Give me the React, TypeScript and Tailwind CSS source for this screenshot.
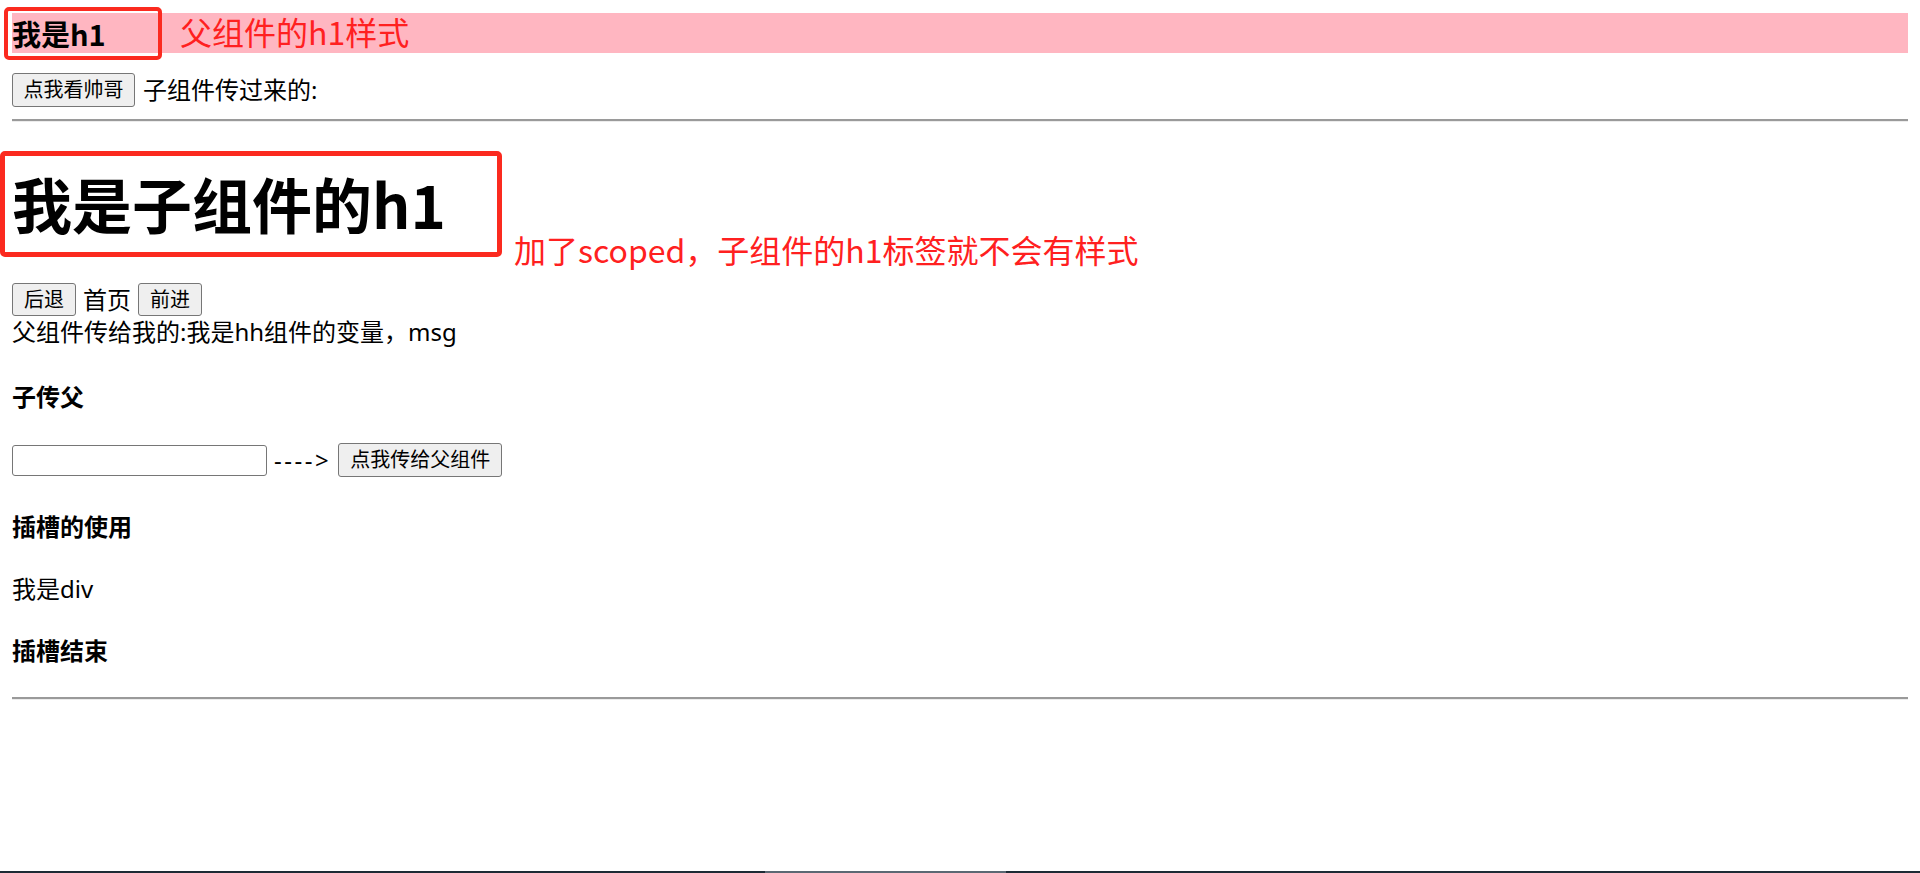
import React from "react";

const btn =
  "h-[33px] px-[9px] text-[20px] leading-none bg-[#efefef] border border-[#767676] rounded-[3px] text-black flex items-center justify-center";

export default function App() {
  return (
    <div className="min-h-[873px] flex flex-col bg-white text-black font-['Noto_Sans','Noto_Sans_CJK_SC',sans-serif]">
      <div className="relative px-[12px]">
        {/* parent h1 */}
        <div className="relative mt-[13px] h-[40px] bg-[#ffb6c1] flex items-center">
          <h1 className="text-[29px] font-bold leading-[40px] font-['Noto_Sans_CJK_SC',sans-serif]">我是h1</h1>
          <span className="absolute left-[168px] top-[-2px] text-[32px] leading-[40px] text-[#ff2020] font-['Noto_Sans_CJK_SC',sans-serif]">
            父组件的h1样式
          </span>
        </div>
        <div className="absolute left-[4px] top-[7px] w-[158px] h-[53px] border-[4px] border-[#fb2a1f] rounded-[5px]" />

        {/* row 2 */}
        <div className="mt-[20px] h-[34px] flex items-center">
          <button className={btn + " h-[34px] w-[123px]"}>点我看帅哥</button>
          <span className="ml-[8px] text-[24px] leading-[32px]">子组件传过来的:</span>
        </div>

        <div className="mt-[12px] h-[3px] border-t-2 border-b border-t-[#9a9a9a] border-b-[#ececec]" />

        {/* child */}
        <div className="relative mt-[41px]">
          <h1 className="text-[60px] font-bold leading-[80px] font-['Noto_Sans_CJK_SC',sans-serif]">我是子组件的h1</h1>
          <div className="absolute left-[-12px] top-[-12px] w-[502px] h-[106px] border-[5px] border-[#fb2a1f] rounded-[5px]" />
          <span className="absolute left-[502px] top-[66px] text-[32px] leading-[40px] text-[#ff2020] whitespace-nowrap font-['Noto_Sans_CJK_SC',sans-serif]">
            加了scoped，子组件的h1标签就不会有样式
          </span>
        </div>

        <div className="mt-[40px] h-[33px] flex items-center">
          <button className={btn + " w-[64px]"}>后退</button>
          <span className="mx-[7px] text-[24px] leading-[32px]">首页</span>
          <button className={btn + " w-[64px]"}>前进</button>
        </div>
        <div className="text-[24px] leading-[32px]">父组件传给我的:我是hh组件的变量，msg</div>

        <h4 className="mt-[33px] text-[24px] font-bold leading-[32px]">子传父</h4>

        <div className="mt-[30px] h-[34px] flex items-center">
          <input className="w-[255px] h-[31px] border border-[#767676] rounded-[3px] bg-white outline-none" />
          <span className="ml-[7px] text-[24px] leading-[32px] tracking-[2.5px]">----&gt;</span>
          <button className={btn + " ml-[7px] h-[34px] w-[164px]"}>点我传给父组件</button>
        </div>

        <h4 className="mt-[34px] text-[24px] font-bold leading-[32px]">插槽的使用</h4>
        <div className="mt-[30px] text-[24px] leading-[32px]">我是div</div>
        <h4 className="mt-[30px] text-[24px] font-bold leading-[32px]">插槽结束</h4>

        <div className="mt-[30px] h-[3px] border-t-2 border-b border-t-[#9a9a9a] border-b-[#ececec]" />
      </div>

      <div className="mt-auto h-[2px] bg-[#1d2b35] flex">
        <div className="ml-[765px] w-[241px] bg-[#5b6873]" />
      </div>
    </div>
  );
}
